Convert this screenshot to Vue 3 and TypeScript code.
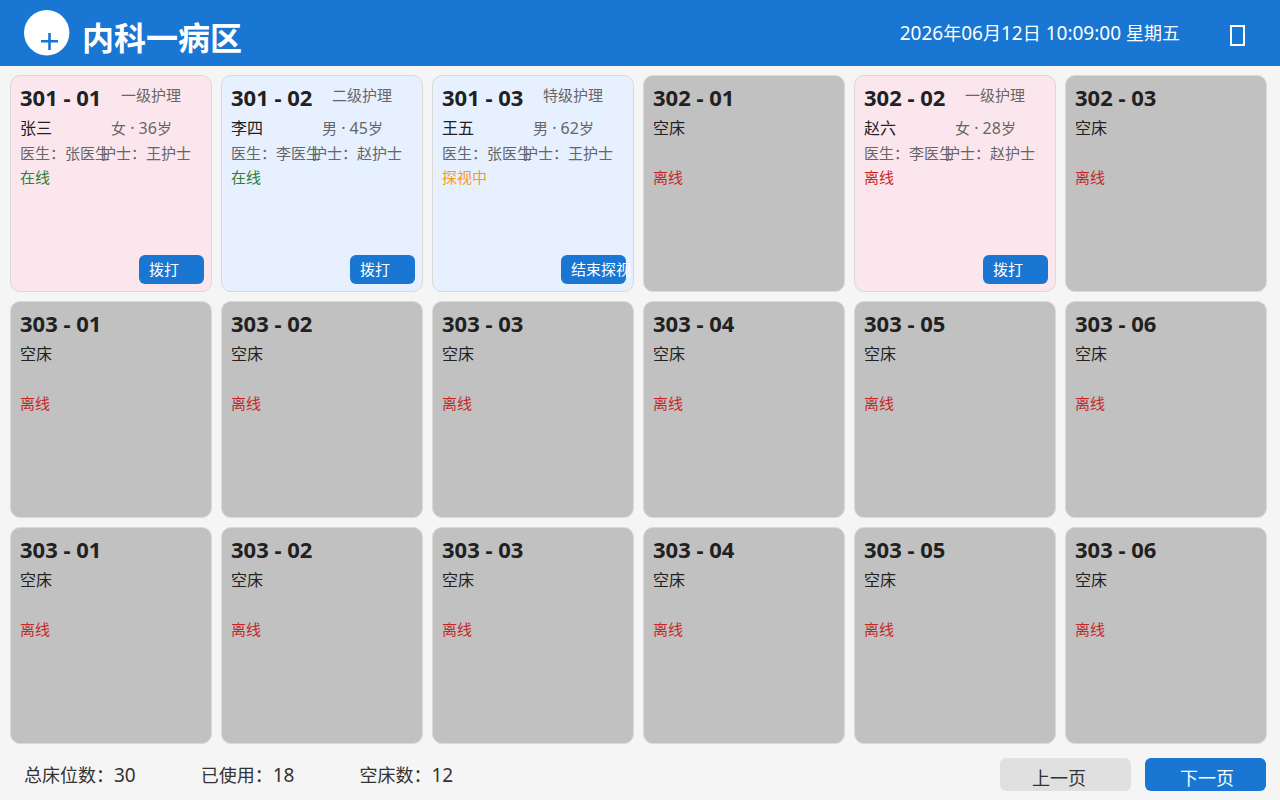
<script setup lang="ts">
import { computed, ref } from 'vue'

type Status = 'online' | 'visiting' | 'offline'

interface Patient {
  name: string
  gender: '男' | '女'
  age: number
  level: string
  doctor: string
  nurse: string
}

interface Bed {
  code: string
  status: Status
  patient?: Patient
}

const statusText: Record<Status, string> = {
  online: '在线',
  visiting: '探视中',
  offline: '离线',
}

const emptyBed = (code: string): Bed => ({ code, status: 'offline' })
const roomRow = (): Bed[] => [1, 2, 3, 4, 5, 6].map((n) => emptyBed(`303 - 0${n}`))

const beds = ref<Bed[]>([
  {
    code: '301 - 01',
    status: 'online',
    patient: { name: '张三', gender: '女', age: 36, level: '一级护理', doctor: '张医生', nurse: '王护士' },
  },
  {
    code: '301 - 02',
    status: 'online',
    patient: { name: '李四', gender: '男', age: 45, level: '二级护理', doctor: '李医生', nurse: '赵护士' },
  },
  {
    code: '301 - 03',
    status: 'visiting',
    patient: { name: '王五', gender: '男', age: 62, level: '特级护理', doctor: '张医生', nurse: '王护士' },
  },
  emptyBed('302 - 01'),
  {
    code: '302 - 02',
    status: 'offline',
    patient: { name: '赵六', gender: '女', age: 28, level: '一级护理', doctor: '李医生', nurse: '赵护士' },
  },
  emptyBed('302 - 03'),
  ...roomRow(),
  ...roomRow(),
])

const now = '2026年06月12日 10:09:00 星期五'
const nowParts = computed(() =>
  now.split(/([\d: ]+)/).filter(Boolean).map((text) => ({ text, latin: /^[\d: ]+$/.test(text) })),
)

const stats = [
  { label: '总床位数：', value: 30 },
  { label: '已使用：', value: 18 },
  { label: '空床数：', value: 12 },
]

function tone(bed: Bed): string {
  if (!bed.patient) return 'empty'
  return bed.patient.gender === '女' ? 'female' : 'male'
}
</script>

<template>
  <div class="board">
    <header class="top">
      <svg class="logo" viewBox="0 0 46 46" aria-hidden="true">
        <circle cx="22.7" cy="22.7" r="22.7" fill="#fff" />
        <path d="M17 31.2H34M25.5 23V40" stroke="#1976d2" stroke-width="2.6" />
      </svg>
      <h1>内科一病区</h1>
      <time datetime="2026-06-12T10:09:00"><span
        v-for="(part, i) in nowParts"
        :key="i"
        :class="{ num: part.latin }"
      >{{ part.text }}</span></time>
      <button class="settings" type="button" aria-label="设置">
        <svg viewBox="0 0 15 21" aria-hidden="true">
          <rect x="1" y="1" width="13" height="19" fill="none" stroke="#fff" stroke-width="2" />
        </svg>
      </button>
    </header>

    <main class="beds">
      <article v-for="(bed, i) in beds" :key="i" class="bed" :class="tone(bed)">
        <div class="row head">
          <h2>{{ bed.code }}</h2>
          <span v-if="bed.patient" class="level">{{ bed.patient.level }}</span>
        </div>
        <div class="row who">
          <span class="name">{{ bed.patient ? bed.patient.name : '空床' }}</span>
          <span v-if="bed.patient">{{ bed.patient.gender }}<span class="age"> · {{ bed.patient.age }}</span>岁</span>
        </div>
        <div class="row staff">
          <template v-if="bed.patient">
            <span>医生：{{ bed.patient.doctor }}</span>
            <span>护士：{{ bed.patient.nurse }}</span>
          </template>
        </div>
        <div class="status" :class="bed.status">{{ statusText[bed.status] }}</div>
        <button v-if="bed.patient" class="call" type="button">
          {{ bed.status === 'visiting' ? '结束探视' : '拨打' }}
        </button>
      </article>
    </main>

    <footer class="bottom">
      <div class="stats">
        <span v-for="s in stats" :key="s.label">{{ s.label }}<span class="num">{{ s.value }}</span></span>
      </div>
      <button class="page prev" type="button">上一页</button>
      <button class="page next" type="button">下一页</button>
    </footer>
  </div>
</template>

<style>
body {
  margin: 0;
  background: #f5f5f5;
}
</style>

<style scoped>
.board {
  display: flex;
  flex-direction: column;
  min-height: 100vh;
  background: #f5f5f5;
  color: #212121;
  font-family: "Noto Sans", "Noto Sans CJK SC", sans-serif;
  white-space: nowrap;
}

button {
  border: 0;
  padding: 0;
  font: inherit;
  cursor: pointer;
}

h1,
h2 {
  margin: 0;
}

.num {
  font-size: 19px;
  white-space: pre;
}

.top {
  display: flex;
  align-items: center;
  box-sizing: border-box;
  height: 66px;
  padding: 0 35px 0 24px;
  background: #1976d2;
  color: #fff;
}

.logo {
  width: 46px;
  height: 46px;
  margin-right: 12px;
}

h1 {
  padding-top: 10px;
  font-size: 32px;
  line-height: 40px;
}

time {
  margin-left: auto;
  font-size: 18px;
  line-height: 28px;
}

.settings {
  display: flex;
  margin-left: 50px;
  padding-top: 4px;
  background: none;
}

.settings svg {
  width: 15px;
  height: 21px;
}

.beds {
  flex: 1;
  display: grid;
  grid-template-columns: repeat(6, 1fr);
  grid-auto-rows: 1fr;
  gap: 9px;
  padding: 9px 13px 0 10px;
}

.bed {
  display: flex;
  flex-direction: column;
  min-width: 0;
  padding: 5px 7px 7px 9px;
  border: 1px solid #d9d9d9;
  border-radius: 10px;
}

.female {
  background: #fce6ed;
}

.male {
  background: #e6f0ff;
}

.empty {
  background: #c1c1c1;
}

.row {
  display: grid;
  color: #666;
  font-size: 15px;
}

.head {
  grid-template-columns: 101px 1fr;
  height: 32px;
}

h2 {
  color: #212121;
  font-size: 22px;
  line-height: 32px;
}

.level {
  line-height: 28px;
}

.who {
  grid-template-columns: 91px 1fr;
  height: 29px;
  line-height: 30px;
}

.name {
  color: #212121;
  font-size: 16px;
}

.age {
  font-size: 16px;
}

.staff {
  grid-template-columns: 81px 1fr;
  height: 22px;
  line-height: 22px;
}

.status {
  font-size: 15px;
  line-height: 26px;
}

.online {
  color: #2e7d32;
}

.visiting {
  color: #f99a10;
}

.offline {
  color: #c62828;
}

.call {
  align-self: flex-end;
  width: 65px;
  height: 29px;
  margin-top: auto;
  padding-left: 10px;
  border-radius: 6px;
  background: #1976d2;
  color: #fff;
  font-size: 15px;
  line-height: 29px;
  text-align: left;
}

.bottom {
  display: flex;
  align-items: center;
  gap: 14px;
  height: 33px;
  padding: 14px 14px 9px 24px;
  color: #333;
  font-size: 18px;
}

.stats {
  display: flex;
  gap: 65px;
  margin-right: auto;
}

.page {
  height: 33px;
  padding-top: 4px;
  border-radius: 6px;
  text-align: left;
}

.prev {
  width: 131px;
  padding-left: 32px;
  background: #e0e0e0;
  color: #333;
}

.next {
  width: 121px;
  padding-left: 35px;
  background: #1976d2;
  color: #fff;
}
</style>
